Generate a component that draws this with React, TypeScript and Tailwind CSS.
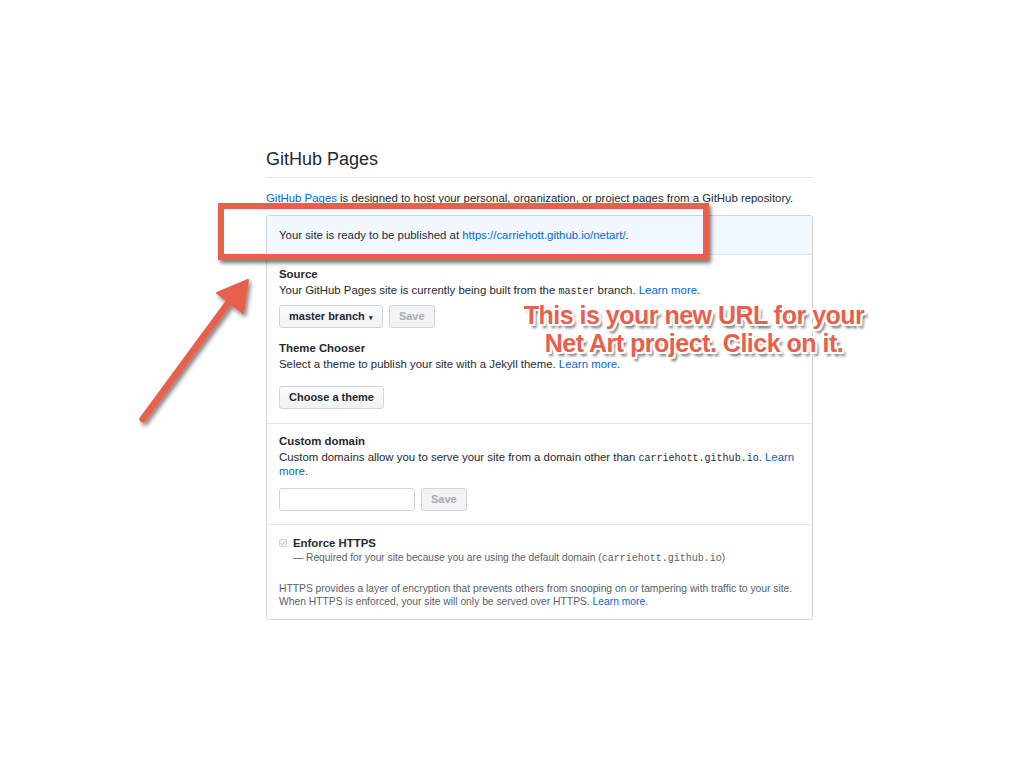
import { Check } from 'lucide-react'

const font = { fontFamily: '"Liberation Sans", Arial, sans-serif' }

function Btn({ children, disabled, className = '' }: { children: React.ReactNode; disabled?: boolean; className?: string }) {
  return (
    <button
      className={
        'h-[23px] rounded-[3px] border border-[#d1d5da] bg-gradient-to-b px-[9px] text-[11px] font-bold leading-[21px] ' +
        (disabled ? 'from-[#f3f4f6] to-[#f3f4f6] text-[#a3aab1]' : 'from-[#fafbfc] to-[#eff3f6] text-[#24292e]') +
        ' ' +
        className
      }
    >
      {children}
    </button>
  )
}

const Mono = ({ children }: { children: React.ReactNode }) => (
  <code className="text-[10px] leading-[11px] [font-family:'Liberation_Mono',monospace]">{children}</code>
)

export default function App() {
  return (
    <div className="relative h-[768px] w-[1024px] bg-white text-[#24292e]" style={font}>
      <div className="ml-[266px] w-[547px] pt-[148px]">
        <h2 className="border-b border-[#e1e4e8] pb-[6px] text-[18px] leading-[23px] font-normal">GitHub Pages</h2>
        <p className="mt-[13px] text-[11.4px] leading-[14px]">
          <a className="text-[#0366d6] underline">GitHub Pages</a> is designed to host your personal, organization, or project pages from a GitHub repository.
        </p>

        <div className="mt-[10px] rounded-[3px] border border-[#d1d5da] text-[11.4px] leading-[14px]">
          <div className="rounded-t-[3px] border-b border-[#d9e6f5] bg-[#f1f8ff] px-[12px] py-[12px]">
            Your site is ready to be published at <a className="text-[#0366d6]">https://carriehott.github.io/netart/</a>.
          </div>

          <div className="border-b border-[#e1e4e8] px-[12px] pt-[12px] pb-[14px]">
            <div className="mb-[2px] font-bold">Source</div>
            <div>
              Your GitHub Pages site is currently being built from the <Mono>master</Mono> branch. <a className="text-[#0366d6]">Learn more</a>.
            </div>
            <div className="mt-[8px] flex gap-[6px]">
              <Btn>
                master branch <span className="ml-[1px] inline-block align-middle text-[7px]">▾</span>
              </Btn>
              <Btn disabled>Save</Btn>
            </div>
            <div className="mt-[13px] mb-[2px] font-bold">Theme Chooser</div>
            <div>
              Select a theme to publish your site with a Jekyll theme. <a className="text-[#0366d6]">Learn more</a>.
            </div>
            <Btn className="mt-[15px]">Choose a theme</Btn>
          </div>

          <div className="border-b border-[#e1e4e8] px-[12px] pt-[10px] pb-[13px]">
            <div className="mb-[2px] font-bold">Custom domain</div>
            <p>Custom domains allow you to serve your site from a domain other than <Mono>carriehott.github.io</Mono>. <a className="text-[#0366d6]">Learn</a></p>
            <p><a className="text-[#0366d6]">more</a>.</p>
            <div className="mt-[10px] flex gap-[6px]">
              <input className="h-[23px] w-[136px] rounded-[3px] border border-[#d1d5da] bg-white" />
              <Btn disabled>Save</Btn>
            </div>
          </div>

          <div className="px-[12px] pt-[11px] pb-[11px]">
            <div className="flex items-center gap-[6px]">
              <span className="flex h-[8px] w-[8px] items-center justify-center rounded-[2px] border border-[#d1d5da] bg-[#f3f4f6]">
                <Check size={7} strokeWidth={3} className="text-[#a3aab1]" />
              </span>
              <span className="font-bold">Enforce HTTPS</span>
            </div>
            <div className="ml-[14px] mt-[1px] text-[10.2px] leading-[14px] text-[#586069]">
              — Required for your site because you are using the default domain (<Mono>carriehott.github.io</Mono>)
            </div>
            <div className="mt-[17px] text-[10.3px] leading-[13px] text-[#586069]">
              HTTPS provides a layer of encryption that prevents others from snooping on or tampering with traffic to your site.
              <br />
              When HTTPS is enforced, your site will only be served over HTTPS. <a className="text-[#0366d6]">Learn more</a>.
            </div>
          </div>
        </div>
      </div>

      {/* annotation: highlight box */}
      <div className="absolute left-[218px] top-[203px] h-[57px] w-[491px] border-[6px] border-[#e8604c] shadow-[2px_3px_4px_rgba(0,0,0,0.55)]" />

      {/* annotation: arrow */}
      <svg className="absolute left-0 top-0" width="1024" height="768" viewBox="0 0 1024 768">
        <defs>
          <filter id="sh" x="-20%" y="-20%" width="140%" height="140%">
            <feDropShadow dx="2" dy="3" stdDeviation="2" floodColor="#000" floodOpacity="0.5" />
          </filter>
        </defs>
        <g filter="url(#sh)" fill="#e8604c" stroke="#e8604c">
          <line x1="143" y1="419" x2="232" y2="298" strokeWidth="7" strokeLinecap="round" />
          <polygon points="248,280 217,293 243,313" strokeWidth="2" strokeLinejoin="round" />
        </g>
      </svg>

      {/* annotation: caption */}
      <div
        className="absolute left-[474px] top-[301px] w-[440px] text-center text-[25px] leading-[28px] font-bold tracking-[-0.5px] text-[#e8604c]"
        style={{
          textShadow:
            '-2px -2px 0 #fff, 2px -2px 0 #fff, -2px 2px 0 #fff, 2px 2px 0 #fff, 0 -2px 0 #fff, 0 2px 0 #fff, -2px 0 0 #fff, 2px 0 0 #fff, 3px 4px 3px rgba(0,0,0,0.6)',
        }}
      >
        This is your new URL for your
        <br />
        Net Art project. Click on it.
      </div>
    </div>
  )
}
